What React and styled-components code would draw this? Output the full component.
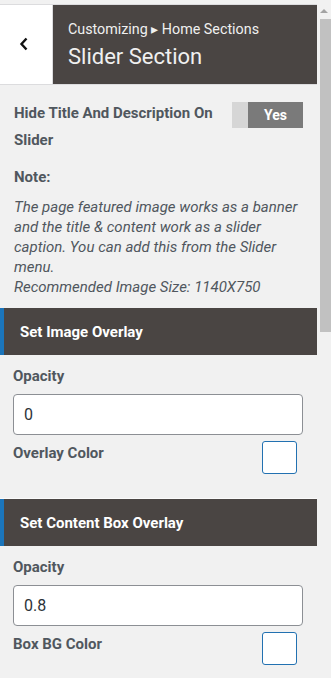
import React from 'react';
import styled, { createGlobalStyle } from 'styled-components';

const GlobalStyle = createGlobalStyle`
  html, body {
    margin: 0;
    padding: 0;
    background: #f1f1f1;
    font-family: Roboto, "Liberation Sans", Arial, sans-serif;
  }
  * { box-sizing: border-box; }
`;

const sections = [
  { title: 'Set Image Overlay', opacity: '0', colorLabel: 'Overlay Color' },
  { title: 'Set Content Box Overlay', opacity: '0.8', colorLabel: 'Box BG Color' },
];

const App = () => {
  return (
    <>
      <GlobalStyle />
      <Frame>
        <Panel>
          <TopStrip />
          <Header>
            <BackButton>
              <svg width="10" height="14" viewBox="0 0 10 14">
                <polyline points="7.5,1.5 2.5,7 7.5,12.5" fill="none" stroke="#111" strokeWidth="2.4" />
              </svg>
            </BackButton>
            <TitleBox>
              <Crumb>Customizing ▸ Home Sections</Crumb>
              <Title>Slider Section</Title>
            </TitleBox>
          </Header>

          <Content>
            <ToggleRow>
              <Label>Hide Title And Description On Slider</Label>
              <Toggle>
                <ToggleOff />
                <ToggleOn>Yes</ToggleOn>
              </Toggle>
            </ToggleRow>
            <NoteTitle>Note:</NoteTitle>
            <Note>
              The page featured image works as a banner and the title &amp; content work as a slider
              caption. You can add this from the Slider menu.
              <br />
              Recommended Image Size: 1140X750
            </Note>
          </Content>

          {sections.map((s, i) => (
            <Section key={s.title} first={i === 0}>
              <SectionHead>{s.title}</SectionHead>
              <SectionBody>
                <Label>Opacity</Label>
                <Input defaultValue={s.opacity} />
                <ColorRow>
                  <ColorLabel>{s.colorLabel}</ColorLabel>
                  <Swatch />
                </ColorRow>
              </SectionBody>
            </Section>
          ))}
        </Panel>
        <Scrollbar>
          <ArrowUp />
          <Thumb />
        </Scrollbar>
      </Frame>
    </>
  );
};

export default App;

const Frame = styled.div`
  display: flex;
  width: 331px;
  height: 678px;
  overflow: hidden;
  background: #f1f1f1;
`;

const Panel = styled.div`
  flex: 0 0 317px;
  display: flex;
  flex-direction: column;
`;

const TopStrip = styled.div`
  height: 5px;
  background: #f1f1f1;
  border-bottom: 1px solid #dcdcde;
`;

const Header = styled.div`
  display: flex;
  height: 80px;
  border-bottom: 1px solid #dcdcde;
`;

const BackButton = styled.div`
  flex: 0 0 53px;
  display: flex;
  align-items: center;
  justify-content: center;
  background: #fff;
  border-right: 1px solid #dcdcde;
  padding-right: 4px;
  padding-bottom: 2px;
`;

const TitleBox = styled.div`
  flex: 1;
  background: #4a4543;
  padding: 15px 0 0 15px;
  color: #f0f0f0;
`;

const Crumb = styled.div`
  font-size: 14.3px;
  line-height: 18px;
`;

const Title = styled.div`
  font-size: 22px;
  line-height: 28px;
  margin-top: 5px;
`;

const Content = styled.div`
  padding: 15px 14px 0 14px;
`;

const ToggleRow = styled.div`
  display: flex;
  align-items: flex-start;
  justify-content: space-between;
`;

const Label = styled.div`
  font-size: 15px;
  font-weight: 700;
  line-height: 27px;
  color: #50575e;
  max-width: 212px;
`;

const Toggle = styled.div`
  display: flex;
  margin-top: 2px;
  width: 71px;
  height: 26px;
`;

const ToggleOff = styled.div`
  width: 16px;
  background: #d6d6d6;
`;

const ToggleOn = styled.div`
  flex: 1;
  background: #7a7a7a;
  color: #fff;
  font-weight: 700;
  font-size: 14px;
  display: flex;
  align-items: center;
  justify-content: center;
`;

const NoteTitle = styled(Label)`
  margin-top: 10px;
`;

const Note = styled.p`
  margin: 6px 0 0 0;
  font-size: 15px;
  font-style: italic;
  line-height: 20px;
  color: #50575e;
`;

const Section = styled.div`
  margin-top: ${(p) => (p.first ? '11px' : '24px')};
  border-top: ${(p) => (p.first ? 'none' : '1px solid #fbfbfb')};
`;

const SectionHead = styled.div`
  height: 47px;
  background: #4a4543;
  border-left: 4px solid #1b75bb;
  color: #fff;
  font-size: 15px;
  font-weight: 700;
  display: flex;
  align-items: center;
  padding-left: 16px;
`;

const SectionBody = styled.div`
  padding: 8px 14px 0 13px;
  display: flex;
  flex-direction: column;
`;

const Input = styled.input`
  margin-top: 4px;
  width: 290px;
  height: 41px;
  border: 1px solid #8c8f94;
  border-radius: 4px;
  background: #fff;
  padding: 0 10px;
  font-family: Roboto, "Liberation Sans", Arial, sans-serif;
  font-size: 16px;
  color: #2c3338;
  outline: none;
`;

const ColorRow = styled.div`
  margin-top: 6px;
  display: flex;
  justify-content: space-between;
  align-items: flex-start;
  width: 284px;
`;

const ColorLabel = styled.div`
  font-size: 15px;
  font-weight: 700;
  line-height: 24px;
  color: #50575e;
`;

const Swatch = styled.div`
  width: 35px;
  height: 33px;
  background: #fff;
  border: 1px solid #2271b1;
  border-radius: 3px;
`;

const Scrollbar = styled.div`
  flex: 0 0 14px;
  background: #f1f1f1;
  display: flex;
  flex-direction: column;
  align-items: center;
  padding-top: 9px;
`;

const ArrowUp = styled.div`
  width: 0;
  height: 0;
  border-left: 4px solid transparent;
  border-right: 4px solid transparent;
  border-bottom: 4px solid #a3a3a3;
`;

const Thumb = styled.div`
  margin-top: 6px;
  margin-left: 2px;
  width: 11px;
  height: 313px;
  background: #c1c1c1;
`;
